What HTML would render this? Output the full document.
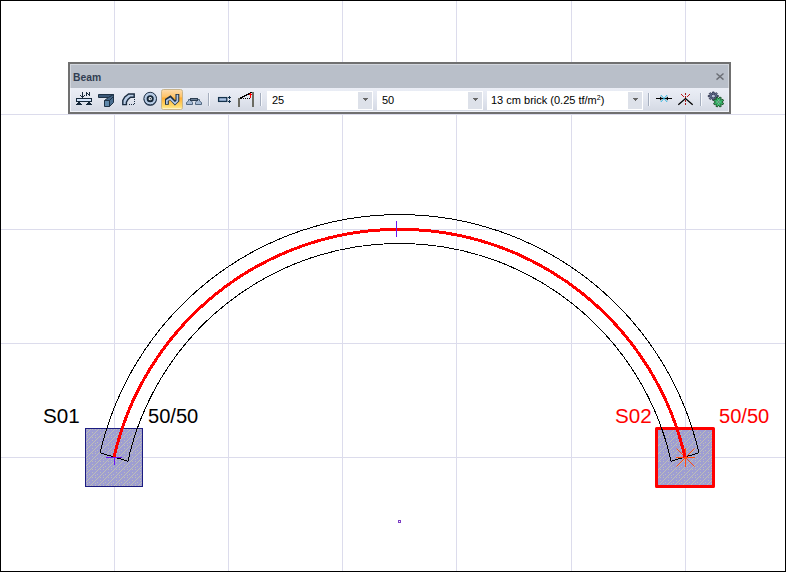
<!DOCTYPE html>
<html>
<head>
<meta charset="utf-8">
<title>Beam</title>
<style>
html,body{margin:0;padding:0;background:#fff;}
body{width:786px;height:572px;position:relative;overflow:hidden;font-family:"Liberation Sans",sans-serif;}
#frame{position:absolute;left:0;top:0;width:784px;height:570px;border:1px solid #000;z-index:5;pointer-events:none;}
#cad{position:absolute;left:0;top:0;}
#tb{position:absolute;left:68px;top:62px;width:659px;height:48px;border:2px solid #707070;background:#b8bec8;z-index:3;}
#tb .title{position:absolute;left:0;top:0;width:659px;height:24px;background:#b9bfc9;box-shadow:inset 1px 0 #d2d6dd,inset -1px 0 #d2d6dd,inset 0 1px #d2d6dd;}
#tb .title span{position:absolute;left:3px;top:7px;font-size:11px;font-weight:bold;color:#323e52;transform:scaleX(0.94);transform-origin:0 0;display:block;}
#tb .bar{position:absolute;left:0;top:24px;width:659px;height:24px;background:linear-gradient(#ebeef6 0%,#e2e6ef 45%,#d3d8e3 100%);box-shadow:inset 1px 0 #f1f3f9,inset -1px 0 #f1f3f9,inset 0 -1px #f1f3f9;}
.inp{position:absolute;top:3px;height:19px;background:#fff;font-size:11px;color:#000;line-height:19px;}
.inp span{position:absolute;left:5px;top:0;white-space:nowrap;}
.inp i{position:absolute;right:1px;top:1px;width:14px;height:17px;background:#dde1e9;}
.inp i:after{content:"";position:absolute;left:7px;top:6px;width:1px;height:1px;background:#666;box-shadow:-2px 0 #666,-1px 0 #666,1px 0 #666,2px 0 #666,-1px 1px #666,0 1px #666,1px 1px #666,0 2px #666;}
.sep{position:absolute;top:5px;width:1px;height:13px;background:#9aa3b2;}
.lbl{position:absolute;font-size:20px;color:#000;white-space:nowrap;line-height:1;transform-origin:0 0;}
.red{color:#f00;}
</style>
</head>
<body>
<svg id="cad" width="786" height="572" viewBox="0 0 786 572">
  <defs>
    <pattern id="hatch" x="6" y="0" width="8" height="8" patternUnits="userSpaceOnUse">
      <rect width="8" height="8" fill="#9e9ed2"/>
      <path d="M1 0h1v1h-1zM0 1h1v1h-1zM7 2h1v1h-1zM6 3h1v1h-1zM5 4h1v1h-1zM4 5h1v1h-1zM3 6h1v1h-1zM2 7h1v1h-1zM3 2h1v1h-1zM1 3h1v1h-1zM1 5h1v1h-1zM6 5h1v1h-1zM6 0h1v1h-1z" fill="#bebeb6" shape-rendering="crispEdges"/>
    </pattern>
  </defs>
  <!-- grid -->
  <g stroke="#dcdcec" stroke-width="1" shape-rendering="crispEdges">
    <path d="M114.5 0V572M228.5 0V572M342.5 0V572M456.5 0V572M571.5 0V572M685.5 0V572"/>
    <path d="M0 114.5H786M0 229.5H786M0 343.5H786M0 457.5H786"/>
  </g>
  <!-- columns -->
  <rect x="85.5" y="428.5" width="57" height="58" fill="url(#hatch)" stroke="#1c1c80" stroke-width="1" shape-rendering="crispEdges"/>
  <rect x="656.5" y="428.5" width="57" height="58" fill="url(#hatch)" stroke="#f00" stroke-width="3" stroke-linejoin="round"/>
  <!-- beam outline -->
  <g fill="none" stroke="#000" stroke-width="1" shape-rendering="crispEdges">
    <path d="M100.1 452.8A307.25 307.25 0 0 1 698.9 452.8L671.1 461.2A278.25 278.25 0 0 0 127.9 461.2Z"/>
  </g>
  <!-- end markers (under axis) -->
  <g stroke="#6a14f0" stroke-width="1" shape-rendering="crispEdges">
    <path d="M106 457.5H122M114.5 449V465"/>
  </g>
  <g stroke="#ff4a10" stroke-width="1">
    <path d="M676 457.5H695M685.5 448V467M676.5 448.5L694.5 466.5M676.5 466.5L694.5 448.5"/>
  </g>
  <!-- axis -->
  <path d="M114 457.3A292.75 292.75 0 0 1 685 457.3" fill="none" stroke="#f00" stroke-width="3" shape-rendering="crispEdges"/>
  <g stroke="#6a14f0" stroke-width="1" shape-rendering="crispEdges">
    <path d="M396.5 221V237"/>
  </g>
  <rect x="398.5" y="520.5" width="2" height="2" fill="none" stroke="#7d3fc4" stroke-width="1" shape-rendering="crispEdges"/>
</svg>

<div class="lbl" style="left:42.6px;top:406px;transform:scaleX(1.03)">S01</div>
<div class="lbl" style="left:147.8px;top:406px;transform:scaleX(1.005)">50/50</div>
<div class="lbl red" style="left:614.6px;top:406px;transform:scaleX(1.03)">S02</div>
<div class="lbl red" style="left:718.8px;top:406px;transform:scaleX(1.005)">50/50</div>

<div id="tb">
  <div class="title"><span>Beam</span></div>
  <div class="bar">
    <div class="inp" style="left:197px;width:106px"><span>25</span><i></i></div>
    <div class="inp" style="left:307px;width:106px"><span>50</span><i></i></div>
    <div class="inp" style="left:417px;width:156px"><span style="left:4px">13 cm brick (0.25 tf/m<sup style="font-size:7px;line-height:0;vertical-align:4px">2</sup>)</span><i></i></div>
  </div>
</div>

<svg id="icons" width="786" height="572" viewBox="0 0 786 572" style="position:absolute;left:0;top:0;z-index:4">
  <defs>
    <linearGradient id="act" x1="0" y1="0" x2="0" y2="1">
      <stop offset="0" stop-color="#fcdcae"/>
      <stop offset="0.38" stop-color="#ffc266"/>
      <stop offset="0.42" stop-color="#ffad33"/>
      <stop offset="0.8" stop-color="#ffd768"/>
      <stop offset="1" stop-color="#ffee9c"/>
    </linearGradient>
  </defs>
  <!-- icon 1: beam with load -->
  <g shape-rendering="crispEdges">
    <rect x="76.5" y="98.5" width="15" height="3" fill="#d4e4fa" stroke="#15283a"/>
    <path d="M76 104.5H82M86 104.5H92" stroke="#15283a"/>
    <path d="M77 103.5H81M87 103.5H91M78 102.5H80M88 102.5H90" stroke="#15283a"/>
    <path d="M82.5 92V98M80 95.5H81M84 95.5H85M81 96.5H84" stroke="#15283a"/>
    <path d="M86.5 92V96M89.5 92V96M87 93.5H88M88 94.5H89" stroke="#15283a"/>
  </g>
  <!-- icon 2: 3d beam corner -->
  <g stroke="#1e3246" stroke-width="1" stroke-linejoin="round">
    <polygon points="98.5,94.5 113.5,94.5 108.5,97.5 98.5,97.5" fill="#3c5a7a"/>
    <polygon points="113.5,94.5 113.5,96.5 109.5,100.5 104.5,100.5 108.5,97.5" fill="#426486"/>
    <polygon points="109.5,100.5 113.5,96.5 113.5,102.5 109.5,106.5" fill="#4a6e90"/>
    <rect x="104.5" y="100.5" width="5" height="6" fill="#6089ab"/>
  </g>
  <!-- icon 3: curved beam -->
  <g>
    <path d="M122.8 104.6V100.4L124.8 96.9L128.6 93.9H134.2V97.3H130.5L128 99.4L126.4 102.2V104.6Z" fill="#b9cde6" stroke="#1c2e42" stroke-width="1.45" stroke-linejoin="miter"/>
    <path d="M134.5 99V104.5H127.5" fill="none" stroke="#1c2e42" stroke-width="1" stroke-dasharray="1 1" shape-rendering="crispEdges"/>
  </g>
  <!-- icon 4: ring -->
  <g>
    <circle cx="150.2" cy="99.3" r="6.5" fill="#26384e"/>
    <circle cx="150.2" cy="98.6" r="6.3" fill="#b7cbe4" stroke="#22344a" stroke-width="1"/>
    <circle cx="150.2" cy="98.7" r="2.6" fill="#ffffff" stroke="#15283a" stroke-width="1.9"/>
    <circle cx="150.3" cy="98.8" r="0.7" fill="#15283a"/>
  </g>
  <!-- icon 5: active polyline beam -->
  <rect x="161.5" y="89.5" width="21" height="20" rx="2" ry="2" fill="url(#act)" stroke="#c9b58c" stroke-width="1"/>
  <path d="M162.5 108.5H181.5" stroke="#fff6d8" stroke-width="1" opacity="0.7"/>
  <path d="M166.9 104.7V100L170.3 97.7L175 102.7L177.4 100.4V94.1" fill="none" stroke="#1c2e42" stroke-width="3.8" stroke-linejoin="miter"/>
  <path d="M166.9 104V100.5L170.2 98.6L175 103.4L177.4 100.9V94.8" fill="none" stroke="#b4c8e2" stroke-width="1.7" stroke-linejoin="miter"/>
  <!-- icon 6: slab heads -->
  <g stroke="#50667f" stroke-width="1" stroke-linejoin="miter">
    <polygon points="188.5,99.5 191.5,99.5 191.5,101 192.5,102.5 192.5,104.5 186.5,104.5 186.5,102.5 188.5,101" fill="#a8bcd6"/>
    <polygon points="196.5,99.5 199.5,99.5 199.5,101 201.5,102.5 201.5,104.5 195.5,104.5 195.5,102.5 196.5,101" fill="#a8bcd6"/>
    <rect x="190.5" y="98.5" width="7" height="2" fill="#6a7f98" stroke="#2c3e52" shape-rendering="crispEdges"/>
  </g>
  <!-- separators -->
  <g shape-rendering="crispEdges">
    <path d="M208.5 93V106M260.5 93V106M648.5 93V106M700.5 93V106" stroke="#a4adbd"/>
    <path d="M209.5 93V106M261.5 93V106M649.5 93V106M701.5 93V106" stroke="#f6f8fc"/>
  </g>
  <!-- icon 7: rect with nodes -->
  <g>
    <rect x="218.6" y="97.6" width="8.2" height="3.8" fill="#a9c2e4" stroke="#14324c" stroke-width="1.3"/>
    <path d="M228 97.5H231M229.5 96V99M228 101.5H231M229.5 100V103" stroke="#14324c" shape-rendering="crispEdges"/>
  </g>
  <!-- icon 8: columns with slope -->
  <g>
    <path d="M239 98V107M253 92V107" stroke="#6b6b62" stroke-width="2" shape-rendering="crispEdges"/>
    <path d="M240 98.3L252 92.3" stroke="#000" stroke-width="1" shape-rendering="crispEdges"/>
    <path d="M241 98.5H250" stroke="#000" stroke-width="1" stroke-dasharray="1 1" shape-rendering="crispEdges"/>
    <path d="M250.5 93V98M249 94.5H252" stroke="#f00" stroke-width="1" shape-rendering="crispEdges"/>
  </g>
  <!-- icon A: converge arrows -->
  <g>
    <path d="M656 98.5H672" stroke="#000" stroke-width="1" shape-rendering="crispEdges"/>
    <path d="M660 96.5L662.5 98.5L660 100.5ZM668 96.5L665.5 98.5L668 100.5Z" fill="#000"/>
    <path d="M660.8 95L667.2 102M667.2 95L660.8 102" stroke="#2bb5de" stroke-width="1"/>
  </g>
  <!-- icon B: caret with burst -->
  <g>
    <path d="M678.3 104.8L685.5 98.6L692.7 104.8" fill="none" stroke="#000" stroke-width="1.3"/>
    <path d="M685.5 93V97.5M685.5 100V104.5" stroke="#a41414" stroke-width="1" stroke-dasharray="2 1" shape-rendering="crispEdges"/>
    <path d="M681 94L684 97M690 94L687 97" stroke="#c01818" stroke-width="1"/>
  </g>
  <!-- icon C: gears -->
  <g>
    <g transform="translate(713.3 96.1) scale(1 0.82)">
      <path d="M3.36 -0.99L5.04 -0.80L5.04 0.80L3.36 0.99L3.07 1.67L4.13 3.00L3.00 4.13L1.67 3.07L0.99 3.36L0.80 5.04L-0.80 5.04L-0.99 3.36L-1.67 3.07L-3.00 4.13L-4.13 3.00L-3.07 1.67L-3.36 0.99L-5.04 0.80L-5.04 -0.80L-3.36 -0.99L-3.07 -1.67L-4.13 -3.00L-3.00 -4.13L-1.67 -3.07L-0.99 -3.36L-0.80 -5.04L0.80 -5.04L0.99 -3.36L1.67 -3.07L3.00 -4.13L4.13 -3.00L3.07 -1.67Z" fill="#6c7b98" stroke="#20233f" stroke-width="0.9" stroke-linejoin="round"/>
      <circle r="2.2" fill="#b4bfd2" stroke="#2b2f52" stroke-width="0.9"/>
    </g>
    <g transform="translate(718.6 102)">
      <path d="M3.38 0.36L4.96 1.19L4.35 2.66L2.65 2.14L2.14 2.65L2.66 4.35L1.19 4.96L0.36 3.38L-0.36 3.38L-1.19 4.96L-2.66 4.35L-2.14 2.65L-2.65 2.14L-4.35 2.66L-4.96 1.19L-3.38 0.36L-3.38 -0.36L-4.96 -1.19L-4.35 -2.66L-2.65 -2.14L-2.14 -2.65L-2.66 -4.35L-1.19 -4.96L-0.36 -3.38L0.36 -3.38L1.19 -4.96L2.66 -4.35L2.14 -2.65L2.65 -2.14L4.35 -2.66L4.96 -1.19L3.38 -0.36Z" fill="#3fc274" stroke="#14481f" stroke-width="0.9" stroke-linejoin="round"/>
      <circle r="1.4" fill="#b0d4c8"/>
      <path d="M-2.4 -2.4L2.4 2.4M2.4 -2.4L-2.4 2.4" stroke="#1d6b3a" stroke-width="0.7"/>
    </g>
  </g>
  <!-- close x -->
  <path d="M716.5 73.5L723.5 79.6M723.5 73.5L716.5 79.6" stroke="#6c6f76" stroke-width="1.4"/>
</svg>
<div id="frame"></div>
</body>
</html>
